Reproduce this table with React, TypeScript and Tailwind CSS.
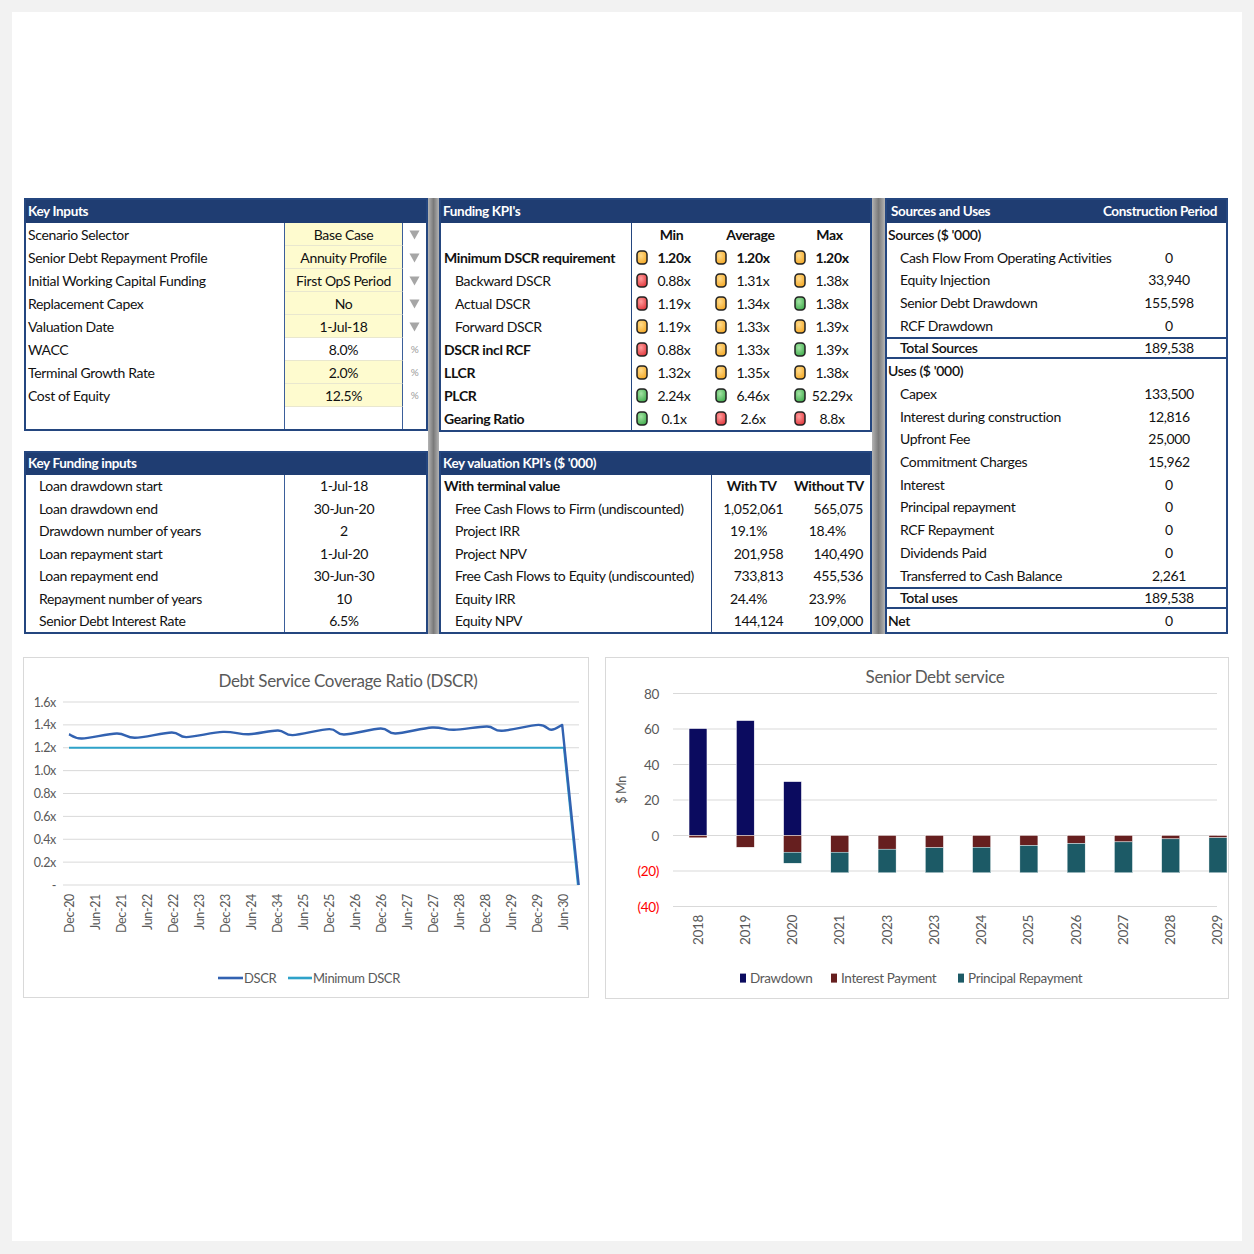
import React from 'react';

type Light = 'o' | 'r' | 'g';

function Dot({ c }: { c: Light }) {
  const fill = c === 'o' ? '#f3a51f' : c === 'r' ? '#df3136' : '#3ba948';
  const hi = c === 'o' ? '#ffdb8c' : c === 'r' ? '#ff9d9d' : '#a3e3a3';
  const id = `dot-${c}`;
  return (
    <svg width="12" height="15" viewBox="0 0 12 15" className="shrink-0">
      <defs>
        <radialGradient id={id} cx="40%" cy="35%" r="75%">
          <stop offset="0%" stopColor={hi} />
          <stop offset="100%" stopColor={fill} />
        </radialGradient>
      </defs>
      <rect x="1" y="1" width="10" height="13" rx="3.5" fill={`url(#${id})`} stroke="#222222" strokeWidth="1.5" />
    </svg>
  );
}

function DropArrow() {
  return (
    <svg width="11" height="10" viewBox="0 0 11 10">
      <polygon points="0.5,0.5 10.5,0.5 5.5,9.5" fill="#a6a6a6" />
    </svg>
  );
}

const keyInputs: { label: string; value: string; yellow: boolean; icon: 'dd' | 'pct' }[] = [
  { label: 'Scenario Selector', value: 'Base Case', yellow: true, icon: 'dd' },
  { label: 'Senior Debt Repayment Profile', value: 'Annuity Profile', yellow: true, icon: 'dd' },
  { label: 'Initial Working Capital Funding', value: 'First OpS Period', yellow: true, icon: 'dd' },
  { label: 'Replacement Capex', value: 'No', yellow: true, icon: 'dd' },
  { label: 'Valuation Date', value: '1-Jul-18', yellow: true, icon: 'dd' },
  { label: 'WACC', value: '8.0%', yellow: false, icon: 'pct' },
  { label: 'Terminal Growth Rate', value: '2.0%', yellow: true, icon: 'pct' },
  { label: 'Cost of Equity', value: '12.5%', yellow: true, icon: 'pct' },
];

const fundingInputs = [
  ['Loan drawdown start', '1-Jul-18'],
  ['Loan drawdown end', '30-Jun-20'],
  ['Drawdown number of years', '2'],
  ['Loan repayment start', '1-Jul-20'],
  ['Loan repayment end', '30-Jun-30'],
  ['Repayment number of years', '10'],
  ['Senior Debt Interest Rate', '6.5%'],
];

const kpis: { label: string; bold?: boolean; indent?: boolean; boldVals?: boolean; vals: [Light, string][] }[] = [
  { label: 'Minimum DSCR requirement', bold: true, boldVals: true, vals: [['o', '1.20x'], ['o', '1.20x'], ['o', '1.20x']] },
  { label: 'Backward DSCR', indent: true, vals: [['r', '0.88x'], ['o', '1.31x'], ['o', '1.38x']] },
  { label: 'Actual DSCR', indent: true, vals: [['r', '1.19x'], ['o', '1.34x'], ['g', '1.38x']] },
  { label: 'Forward DSCR', indent: true, vals: [['o', '1.19x'], ['o', '1.33x'], ['o', '1.39x']] },
  { label: 'DSCR incl RCF', bold: true, vals: [['r', '0.88x'], ['o', '1.33x'], ['g', '1.39x']] },
  { label: 'LLCR', bold: true, vals: [['o', '1.32x'], ['o', '1.35x'], ['o', '1.38x']] },
  { label: 'PLCR', bold: true, vals: [['g', '2.24x'], ['g', '6.46x'], ['g', '52.29x']] },
  { label: 'Gearing Ratio', bold: true, vals: [['g', '0.1x'], ['r', '2.6x'], ['r', '8.8x']] },
];

const valuation: [string, string, string, boolean][] = [
  ['Free Cash Flows to Firm (undiscounted)', '1,052,061', '565,075', false],
  ['Project IRR', '19.1%', '18.4%', true],
  ['Project NPV', '201,958', '140,490', false],
  ['Free Cash Flows to Equity (undiscounted)', '733,813', '455,536', false],
  ['Equity IRR', '24.4%', '23.9%', true],
  ['Equity NPV', '144,124', '109,000', false],
];

type SU = { label: string; value?: string; kind: 'head' | 'item' | 'total' };
const sources: SU[] = [
  { label: "Sources ($ '000)", kind: 'head' },
  { label: 'Cash Flow From Operating Activities', value: '0', kind: 'item' },
  { label: 'Equity Injection', value: '33,940', kind: 'item' },
  { label: 'Senior Debt Drawdown', value: '155,598', kind: 'item' },
  { label: 'RCF Drawdown', value: '0', kind: 'item' },
  { label: 'Total Sources', value: '189,538', kind: 'total' },
  { label: "Uses ($ '000)", kind: 'head' },
  { label: 'Capex', value: '133,500', kind: 'item' },
  { label: 'Interest during construction', value: '12,816', kind: 'item' },
  { label: 'Upfront Fee', value: '25,000', kind: 'item' },
  { label: 'Commitment Charges', value: '15,962', kind: 'item' },
  { label: 'Interest', value: '0', kind: 'item' },
  { label: 'Principal repayment', value: '0', kind: 'item' },
  { label: 'RCF Repayment', value: '0', kind: 'item' },
  { label: 'Dividends Paid', value: '0', kind: 'item' },
  { label: 'Transferred to Cash Balance', value: '2,261', kind: 'item' },
  { label: 'Total uses', value: '189,538', kind: 'total' },
  { label: 'Net', value: '0', kind: 'head' },
];

function Header({ children, tall }: { children: React.ReactNode; tall?: boolean }) {
  return (
    <div
      className={`flex ${tall ? 'h-[23px]' : 'h-[22px]'} items-center justify-between bg-[#1f3d72] px-[2px] text-[13.5px] font-bold tracking-tight text-white`}
    >
      {children}
    </div>
  );
}

function GrayBar({ w }: { w: string }) {
  return <div className={`${w} shrink-0 bg-linear-to-r from-[#b4b4b4] via-[#7a7a7a] to-[#b4b4b4]`} />;
}

// Catmull-Rom -> cubic bezier
function smooth(pts: [number, number][]) {
  let d = `M${pts[0][0]},${pts[0][1]}`;
  for (let i = 0; i < pts.length - 1; i++) {
    const p0 = pts[i - 1] || pts[i];
    const p1 = pts[i];
    const p2 = pts[i + 1];
    const p3 = pts[i + 2] || p2;
    const c1x = p1[0] + (p2[0] - p0[0]) / 6;
    const c1y = p1[1] + (p2[1] - p0[1]) / 6;
    const c2x = p2[0] - (p3[0] - p1[0]) / 6;
    const c2y = p2[1] - (p3[1] - p1[1]) / 6;
    d += ` C${c1x.toFixed(1)},${c1y.toFixed(1)} ${c2x.toFixed(1)},${c2y.toFixed(1)} ${p2[0].toFixed(1)},${p2[1].toFixed(1)}`;
  }
  return d;
}

const dscrRaw: [number, number][] = [
  [68, 1.318], [80.8, 1.281], [115.7, 1.325], [134, 1.287], [170.7, 1.333], [185.3, 1.293],
  [222, 1.339], [247.7, 1.318], [277, 1.351], [291.7, 1.311], [328.3, 1.363], [343, 1.316],
  [379.7, 1.368], [394.3, 1.325], [431, 1.377], [453, 1.357], [486, 1.386], [500.7, 1.348],
  [537.4, 1.4], [550.2, 1.357], [561.2, 1.4],
];

const dscrLabels = [
  'Dec-20', 'Jun-21', 'Dec-21', 'Jun-22', 'Dec-22', 'Jun-23', 'Dec-23', 'Jun-24', 'Dec-34', 'Jun-25',
  'Dec-25', 'Jun-26', 'Dec-26', 'Jun-27', 'Dec-27', 'Jun-28', 'Dec-28', 'Jun-29', 'Dec-29', 'Jun-30',
];

function DscrChart() {
  const y = (v: number) => 227 - v * 114.375;
  const pts = dscrRaw.map(([x, v]) => [x - 23, y(v)] as [number, number]);
  const path = smooth(pts) + ` L${577.7 - 23},${y(0)}`;
  const ticks = ['1.6x', '1.4x', '1.2x', '1.0x', '0.8x', '0.6x', '0.4x', '0.2x', '-'];
  return (
    <svg width="566" height="340" viewBox="0 0 566 340" className="block">
      <text x="324" y="29" textAnchor="middle" fontSize="17" fill="#595959">
        Debt Service Coverage Ratio (DSCR)
      </text>
      {ticks.map((t, i) => {
        const gy = 44 + i * 22.875;
        return (
          <g key={t}>
            <line x1="39" x2="555" y1={gy} y2={gy} stroke="#d9d9d9" strokeWidth="1" />
            <text x="32" y={gy + 4.5} textAnchor="end" fontSize="12.5" fill="#595959">
              {t}
            </text>
          </g>
        );
      })}
      {dscrLabels.map((l, i) => {
        const lx = 45 + i * 26.05 + 4.5;
        return (
          <text key={i} x={lx} y={236} textAnchor="end" fontSize="12.5" fill="#595959" transform={`rotate(-90 ${lx} 236)`}>
            {l}
          </text>
        );
      })}
      <path d={`M45,${y(1.2)} L540,${y(1.2)} L554,${y(0)}`} fill="none" stroke="#2ea2c9" strokeWidth="2.2" />
      <path d={path} fill="none" stroke="#3262b1" strokeWidth="2.4" strokeLinejoin="round" />
      <line x1="194" x2="219" y1="320" y2="320" stroke="#3262b1" strokeWidth="2.6" />
      <text x="220" y="324.5" fontSize="13" fill="#595959">DSCR</text>
      <line x1="264" x2="288" y1="320" y2="320" stroke="#2ea2c9" strokeWidth="2.6" />
      <text x="289" y="324.5" fontSize="13" fill="#595959">Minimum DSCR</text>
    </svg>
  );
}

const debt: { year: string; draw: number; int: number; prin: number }[] = [
  { year: '2018', draw: 60.3, int: 1.3, prin: 0 },
  { year: '2019', draw: 64.8, int: 6.6, prin: 0 },
  { year: '2020', draw: 30.4, int: 9.4, prin: 6.2 },
  { year: '2021', draw: 0, int: 9.4, prin: 11.6 },
  { year: '2023', draw: 0, int: 7.7, prin: 13.3 },
  { year: '2023', draw: 0, int: 6.9, prin: 14.1 },
  { year: '2024', draw: 0, int: 6.6, prin: 14.4 },
  { year: '2025', draw: 0, int: 5.6, prin: 15.4 },
  { year: '2026', draw: 0, int: 4.5, prin: 16.5 },
  { year: '2027', draw: 0, int: 3.6, prin: 17.4 },
  { year: '2028', draw: 0, int: 1.9, prin: 19.1 },
  { year: '2029', draw: 0, int: 1.3, prin: 19.7 },
];

function DebtChart() {
  const k = 1.775;
  const zero = 177.5;
  const ticks: [number, string][] = [
    [80, '80'], [60, '60'], [40, '40'], [20, '20'], [0, '0'], [-20, '(20)'], [-40, '(40)'],
  ];
  return (
    <svg width="623" height="341" viewBox="0 0 623 341" className="block">
      <text x="329" y="25" textAnchor="middle" fontSize="17" fill="#595959">
        Senior Debt service
      </text>
      {ticks.map(([v, t]) => {
        const gy = zero - v * k;
        return (
          <g key={t}>
            <line x1="67" x2="611" y1={gy} y2={gy} stroke="#d9d9d9" strokeWidth="1" />
            <text x="53" y={gy + 5} textAnchor="end" fontSize="13.5" fill={v < 0 ? '#ff0000' : '#595959'}>
              {t}
            </text>
          </g>
        );
      })}
      <text x="20" y="132" textAnchor="middle" fontSize="12.5" fill="#595959" transform="rotate(-90 20 132)">
        $ Mn
      </text>
      {debt.map((d, i) => {
        const cx = 92 + i * 47.27;
        const x = cx - 9;
        const lx = cx + 4.5;
        return (
          <g key={i}>
            {d.draw > 0 && (
              <rect x={x} y={zero - d.draw * k} width="18" height={d.draw * k} fill="#0b0b5f" stroke="#ffffff" strokeWidth="0.6" />
            )}
            <rect x={x} y={zero} width="18" height={d.int * k} fill="#661f1f" stroke="#ffffff" strokeWidth="0.4" />
            {d.prin > 0 && (
              <rect x={x} y={zero + d.int * k} width="18" height={d.prin * k} fill="#1c5a66" stroke="#ffffff" strokeWidth="0.4" />
            )}
            <text x={lx} y="257" textAnchor="end" fontSize="13.5" fill="#595959" transform={`rotate(-90 ${lx} 257)`}>
              {d.year}
            </text>
          </g>
        );
      })}
      <rect x="134" y="315.6" width="6" height="9" fill="#0b0b5f" />
      <text x="144" y="325" fontSize="13.5" fill="#595959">Drawdown</text>
      <rect x="225" y="315.6" width="6" height="9" fill="#661f1f" />
      <text x="235" y="325" fontSize="13.5" fill="#595959">Interest Payment</text>
      <rect x="352" y="315.6" width="6" height="9" fill="#1c5a66" />
      <text x="362" y="325" fontSize="13.5" fill="#595959">Principal Repayment</text>
    </svg>
  );
}

export default function App() {
  return (
    <div className="min-h-screen bg-[#f2f2f2] p-[12px] font-[Lato,'Liberation_Sans',sans-serif] text-[14px] tracking-tight text-[#111]">
      <div className="h-[1229px] bg-white pl-[12px] pr-[14px] pt-[186px]">
        <div className="flex h-[436px]">
          {/* left column */}
          <div className="flex w-[404px] shrink-0 flex-col">
            <div className="border-2 border-[#24467f]">
              <Header tall>Key Inputs</Header>
              {keyInputs.map((r) => (
                <div key={r.label} className="flex h-[23px]">
                  <div className="flex w-[259px] items-center border-r border-[#3b5e9a] pl-[2px]">{r.label}</div>
                  <div
                    className={`flex w-[118px] items-center justify-center border-b border-r border-b-[#e9e7cf] border-r-[#3b5e9a] ${
                      r.yellow ? 'bg-[#fefbcf]' : 'bg-white'
                    }`}
                  >
                    {r.value}
                  </div>
                  <div className="flex flex-1 items-center justify-center">
                    {r.icon === 'dd' ? <DropArrow /> : <span className="text-[10px] text-[#9a9a9a]">%</span>}
                  </div>
                </div>
              ))}
              <div className="flex h-[22px]">
                <div className="w-[259px] border-r border-[#3b5e9a]" />
                <div className="w-[118px] border-r border-[#3b5e9a]" />
              </div>
            </div>
            <div className="h-[20px]" />
            <div className="flex flex-1 flex-col border-2 border-[#24467f]">
              <Header>Key Funding inputs</Header>
              {fundingInputs.map(([l, v]) => (
                <div key={l} className="flex h-[22.5px]">
                  <div className="flex w-[259px] items-center border-r border-[#3b5e9a] pl-[13px]">{l}</div>
                  <div className="flex w-[118px] items-center justify-center">{v}</div>
                </div>
              ))}
            </div>
          </div>

          <GrayBar w="w-[11px]" />

          {/* middle column */}
          <div className="flex w-[433px] shrink-0 flex-col">
            <div className="border-2 border-[#24467f]">
              <Header tall>Funding KPI's</Header>
              <div className="flex h-[23px]">
                <div className="w-[191px] border-r border-[#24467f]" />
                {['Min', 'Average', 'Max'].map((h) => (
                  <div key={h} className="flex w-[79px] items-center justify-center font-bold">
                    {h}
                  </div>
                ))}
              </div>
              {kpis.map((r) => (
                <div key={r.label} className="flex h-[23px]">
                  <div
                    className={`flex w-[191px] items-center border-r border-[#24467f] ${r.indent ? 'pl-[14px]' : 'pl-[3px]'} ${
                      r.bold ? 'font-bold' : ''
                    }`}
                  >
                    {r.label}
                  </div>
                  {r.vals.map(([c, v], i) => (
                    <div key={i} className="flex w-[79px] items-center pl-[4px]">
                      <Dot c={c} />
                      <span className={`w-[52px] text-center ${r.boldVals ? 'font-bold' : ''}`}>{v}</span>
                    </div>
                  ))}
                </div>
              ))}
            </div>
            <div className="h-[20px]" />
            <div className="flex flex-1 flex-col border-2 border-[#24467f]">
              <Header>Key valuation KPI's ($ '000)</Header>
              <div className="flex h-[22.5px] font-bold">
                <div className="flex w-[272px] items-center border-r border-[#24467f] pl-[3px]">With terminal value</div>
                <div className="flex w-[79px] items-center justify-center">With TV</div>
                <div className="flex w-[79px] items-center justify-end pr-[6px]">Without TV</div>
              </div>
              {valuation.map(([l, a, b, pct]) => (
                <div key={l} className="flex h-[22.5px]">
                  <div className="flex w-[272px] items-center border-r border-[#24467f] pl-[14px]">{l}</div>
                  <div className={`flex w-[79px] items-center justify-end ${pct ? 'pr-[24px]' : 'pr-[8px]'}`}>{a}</div>
                  <div className={`flex w-[79px] items-center justify-end ${pct ? 'pr-[24px]' : 'pr-[7px]'}`}>{b}</div>
                </div>
              ))}
            </div>
          </div>

          <GrayBar w="w-[13px]" />

          {/* right column */}
          <div className="flex flex-1 flex-col border-2 border-[#24467f]">
            <div className="flex h-[23px] items-center justify-between bg-[#1f3d72] pl-[4px] pr-[9px] text-[13.5px] font-bold tracking-tight text-white">
              <span>Sources and Uses</span>
              <span>Construction Period</span>
            </div>
            {sources.map((r) => (
              <div
                key={r.label}
                className={`flex h-[22.75px] items-center ${r.kind === 'total' ? 'border-y-2 border-[#24467f]' : ''}`}
              >
                <div
                  className={`flex-1 ${r.kind === 'head' ? 'pl-[1px] font-semibold' : 'pl-[13px]'} ${
                    r.kind === 'total' ? 'font-semibold' : ''
                  }`}
                >
                  {r.label}
                </div>
                <div className="mr-[7px] w-[100px] text-center">{r.value ?? ''}</div>
              </div>
            ))}
          </div>
        </div>

        <div className="-ml-px mt-[23px] flex gap-[16px]">
          <div className="h-[341px] w-[566px] border border-[#d9d9d9]">
            <DscrChart />
          </div>
          <div className="h-[342px] w-[624px] border border-[#d9d9d9]">
            <DebtChart />
          </div>
        </div>
      </div>
    </div>
  );
}
